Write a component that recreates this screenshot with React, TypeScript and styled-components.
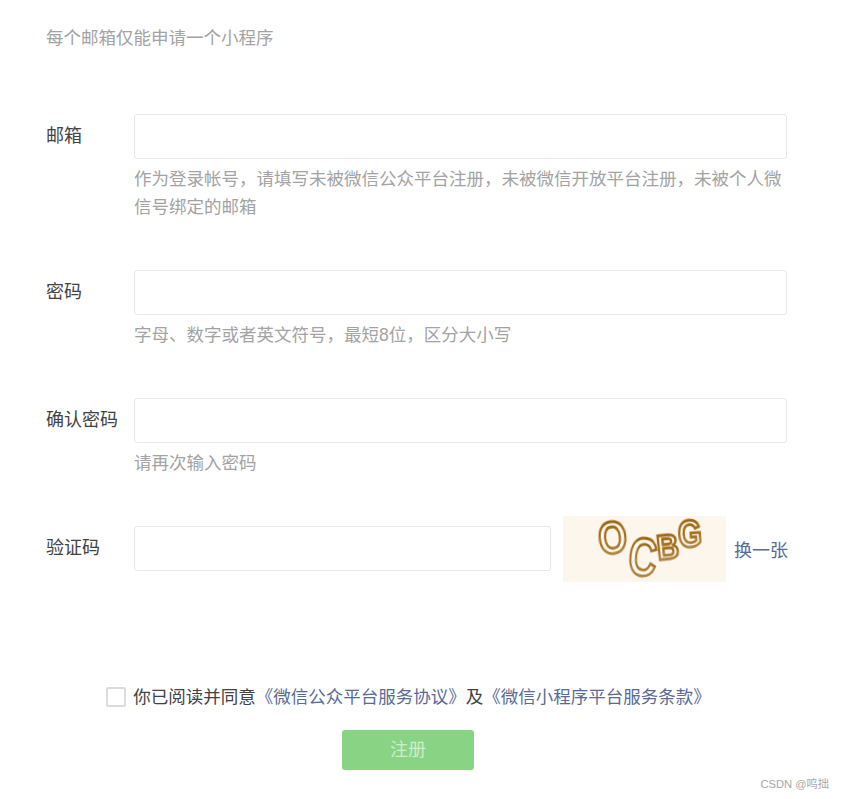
import React from 'react';
import styled, { createGlobalStyle } from 'styled-components';

const GlobalStyle = createGlobalStyle`
  html, body {
    margin: 0;
    padding: 0;
    background: #fff;
  }
  body {
    font-family: "Liberation Sans", "Noto Sans CJK SC", sans-serif;
  }
`;

const Page = styled.div`
  position: relative;
  width: 843px;
  height: 799px;
  box-sizing: border-box;
  padding: 24px 0 0 46px;
  overflow: hidden;
  font-size: 18px;
  line-height: 28px;
  color: #424242;
`;

const Intro = styled.p`
  margin: 0 0 62px;
  font-size: 17.5px;
  color: #a3a3a3;
`;

const Row = styled.div<{ $captcha?: boolean }>`
  display: flex;
  align-items: flex-start;
  margin-bottom: ${(p) => (p.$captcha ? '0' : '49px')};
  margin-top: ${(p) => (p.$captcha ? '-10px' : '0')};
`;

const Label = styled.label<{ $captcha?: boolean }>`
  flex: 0 0 88px;
  line-height: 44px;
  margin-top: ${(p) => (p.$captcha ? '10px' : '0')};
`;

const Field = styled.div`
  width: 653px;
`;

const Input = styled.input<{ $short?: boolean }>`
  display: block;
  box-sizing: border-box;
  width: ${(p) => (p.$short ? '417px' : '100%')};
  height: 45px;
  margin-bottom: ${(p) => (p.$short ? '1px' : '0')};
  padding: 0 12px;
  border: 1px solid #e7e7eb;
  border-radius: 3px;
  background: #fff;
  outline: none;
`;

const Hint = styled.p`
  margin: 6px 0 0;
  font-size: 17.5px;
  color: #a3a3a3;
`;

const CaptchaLine = styled.div`
  display: flex;
  align-items: center;
`;

const CaptchaImage = styled.svg`
  display: block;
  flex: none;
  width: 163px;
  height: 66px;
  margin-left: 12px;
  background: #fdf6ec;
`;

const CaptchaLetter = styled.text`
  font-family: "Liberation Sans", sans-serif;
  font-weight: 700;
  fill: #fffaf0;
  stroke: url(#captchaInk);
  stroke-width: 2.8px;
  filter: blur(0.4px);
`;

const SwapLink = styled.a`
  margin-left: 8px;
  margin-top: 4px;
  color: #576b95;
  white-space: nowrap;
`;

const Footer = styled.div`
  display: flex;
  flex-direction: column;
  align-items: center;
  width: 724px;
  margin-top: 104px;
`;

const Agreement = styled.div`
  display: flex;
  align-items: center;
  height: 22px;
  margin-left: 1px;
  font-size: 17.5px;
  white-space: nowrap;
`;

const CheckBox = styled.span`
  flex: none;
  box-sizing: border-box;
  width: 20px;
  height: 20px;
  margin-right: 7px;
  border: 2px solid #dcdcdc;
  border-radius: 2px;
  background: #fff;
`;

const TermsLink = styled.a`
  color: #576b95;
`;

const SubmitButton = styled.button`
  width: 132px;
  height: 40px;
  margin-top: 22px;
  padding: 0;
  border: 0;
  border-radius: 3px;
  background: #89d385;
  color: #cfeccd;
  font: inherit;
`;

const Watermark = styled.span`
  position: absolute;
  right: 14px;
  bottom: 7px;
  font-size: 11.2px;
  line-height: 16px;
  color: #a8a8a8;
`;

const letters = [
  { ch: 'O', x: 37, y: 39, size: 46, sx: 0.8, rot: -6 },
  { ch: 'C', x: 64, y: 58, size: 54, sx: 0.72, rot: 6 },
  { ch: 'B', x: 95, y: 44, size: 36, sx: 0.85, rot: -6 },
  { ch: 'G', x: 116, y: 32, size: 38, sx: 0.8, rot: -4 },
];

export default function App() {
  return (
    <Page>
      <GlobalStyle />
      <Intro>每个邮箱仅能申请一个小程序</Intro>

      <Row>
        <Label>邮箱</Label>
        <Field>
          <Input />
          <Hint>作为登录帐号，请填写未被微信公众平台注册，未被微信开放平台注册，未被个人微信号绑定的邮箱</Hint>
        </Field>
      </Row>

      <Row>
        <Label>密码</Label>
        <Field>
          <Input type="password" />
          <Hint>字母、数字或者英文符号，最短8位，区分大小写</Hint>
        </Field>
      </Row>

      <Row>
        <Label>确认密码</Label>
        <Field>
          <Input type="password" />
          <Hint>请再次输入密码</Hint>
        </Field>
      </Row>

      <Row $captcha>
        <Label $captcha>验证码</Label>
        <CaptchaLine>
          <Input $short />
          <CaptchaImage viewBox="0 0 163 66">
            <defs>
              <linearGradient id="captchaInk" x1="0" y1="0" x2="0" y2="1">
                <stop offset="0" stopColor="#9c6410" />
                <stop offset="0.55" stopColor="#a56f1e" />
                <stop offset="1" stopColor="#b9935c" />
              </linearGradient>
            </defs>
            {letters.map((l) => (
              <CaptchaLetter
                key={l.ch}
                fontSize={l.size}
                transform={`translate(${l.x} ${l.y}) rotate(${l.rot}) scale(${l.sx} 1)`}
              >
                {l.ch}
              </CaptchaLetter>
            ))}
          </CaptchaImage>
          <SwapLink>换一张</SwapLink>
        </CaptchaLine>
      </Row>

      <Footer>
        <Agreement>
          <CheckBox />
          你已阅读并同意<TermsLink>《微信公众平台服务协议》</TermsLink>及<TermsLink>《微信小程序平台服务条款》</TermsLink>
        </Agreement>
        <SubmitButton>注册</SubmitButton>
      </Footer>

      <Watermark>CSDN @鸣拙</Watermark>
    </Page>
  );
}
